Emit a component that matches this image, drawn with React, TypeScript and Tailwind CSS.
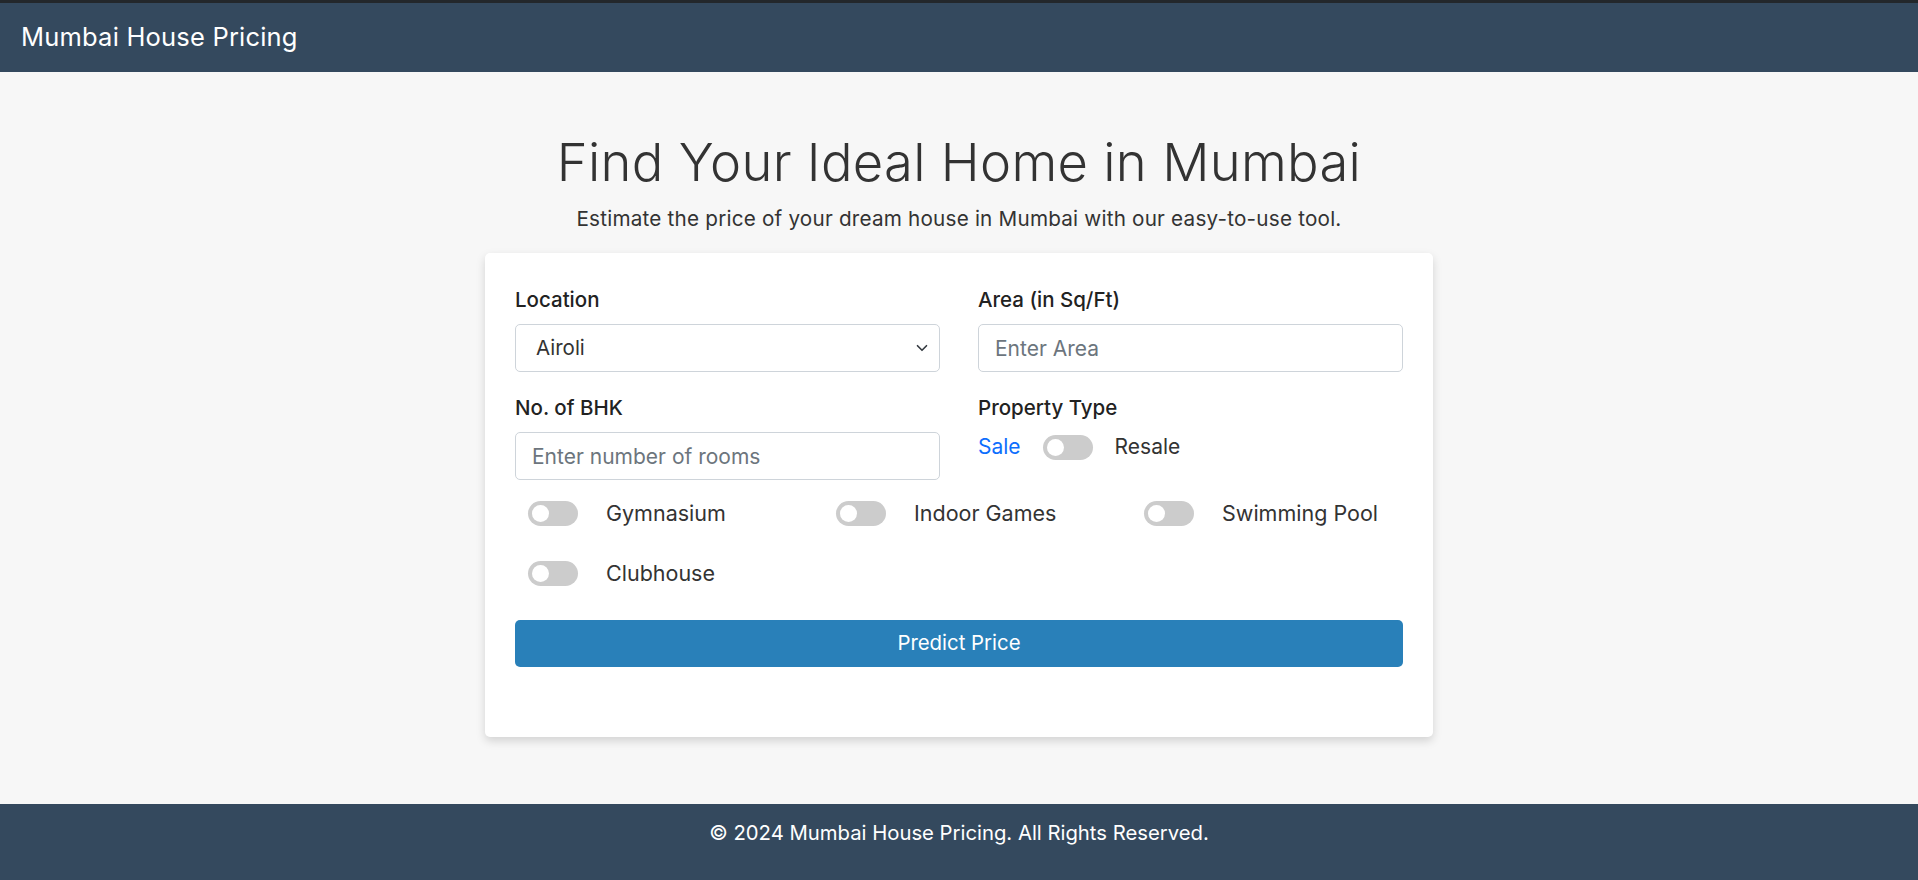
import React from "react";

const Toggle = () => (
  <span className="relative inline-block w-[50px] h-[25px] rounded-full bg-[#cccccc] shrink-0">
    <span className="absolute left-[4px] top-[4px] w-[17px] h-[17px] rounded-full bg-white" />
  </span>
);

const amenities = ["Gymnasium", "Indoor Games", "Swimming Pool", "Clubhouse"];

const App = () => {
  return (
    <div className="min-h-screen flex flex-col bg-[#f7f7f7] text-[#333333] font-['Inter','Noto_Sans',sans-serif]">
      <nav className="h-[72px] bg-[#34495e] border-t-[3px] border-[#23272b] flex items-center px-[21px]">
        <span className="text-white text-[25.5px] tracking-[0.2px]">Mumbai House Pricing</span>
      </nav>

      <main className="flex-1 flex flex-col items-center pt-[57px]">
        <h1 className="text-[52.5px] font-light leading-[67px] tracking-[0.3px]">
          Find Your Ideal Home in Mumbai
        </h1>
        <p className="mt-[8px] text-[20.7px] leading-[30px] tracking-[0.2px]">
          Estimate the price of your dream house in Mumbai with our easy-to-use tool.
        </p>

        <form className="mt-[19px] w-[948px] bg-white rounded-[5px] shadow-[0_4px_10px_rgba(0,0,0,0.15)] px-[30px] pt-[32px] pb-[70px]">
          <div className="grid grid-cols-2 gap-x-[38px]">
            <div className="flex flex-col">
              <label className="text-[20.5px] font-medium leading-[30px] text-[#222]">Location</label>
              <div className="relative mt-[9px]">
                <select className="appearance-none w-full h-[48px] border border-[#ced4da] rounded-[5px] bg-white pl-[20px] text-[20.5px] text-[#333] outline-none">
                  <option>Airoli</option>
                </select>
                <svg
                  className="absolute right-[12px] top-[18px] pointer-events-none"
                  width="12"
                  height="12"
                  viewBox="0 0 16 16"
                  fill="none"
                  stroke="#343a40"
                  strokeWidth="2.2"
                  strokeLinecap="round"
                  strokeLinejoin="round"
                >
                  <path d="M2 5l6 6 6-6" />
                </svg>
              </div>
            </div>
            <div className="flex flex-col">
              <label className="text-[20.5px] font-medium leading-[30px] text-[#222]">Area (in Sq/Ft)</label>
              <input
                className="mt-[9px] h-[48px] border border-[#ced4da] rounded-[5px] px-[16px] text-[21px] placeholder:text-[#6c757d] outline-none"
                placeholder="Enter Area"
              />
            </div>

            <div className="flex flex-col mt-[21px]">
              <label className="text-[20.5px] font-medium leading-[30px] text-[#222]">No. of BHK</label>
              <input
                className="mt-[9px] h-[48px] border border-[#ced4da] rounded-[5px] px-[16px] text-[21px] placeholder:text-[#6c757d] outline-none"
                placeholder="Enter number of rooms"
              />
            </div>
            <div className="flex flex-col mt-[21px]">
              <label className="text-[20.5px] font-medium leading-[30px] text-[#222]">Property Type</label>
              <div className="mt-[9px] flex items-center gap-[22px] text-[21px] leading-[30px]">
                <span className="text-[#0d6efd]">Sale</span>
                <Toggle />
                <span>Resale</span>
              </div>
            </div>
          </div>

          <div className="mt-[18px] pl-[13px] grid grid-cols-[308px_308px_272px] gap-y-[30px]">
            {amenities.map((a) => (
              <div key={a} className="flex items-center gap-[28px] h-[30px] text-[21.5px]">
                <Toggle />
                <span>{a}</span>
              </div>
            ))}
          </div>

          <button
            type="button"
            className="mt-[32px] w-full h-[47px] rounded-[5px] bg-[#2980b9] text-white text-[20.4px]"
          >
            Predict Price
          </button>
        </form>
      </main>

      <footer className="h-[76px] bg-[#34495e] text-white text-[20.3px] leading-[30px] flex justify-center pt-[14px]">
        © 2024 Mumbai House Pricing. All Rights Reserved.
      </footer>
    </div>
  );
};

export default App;
